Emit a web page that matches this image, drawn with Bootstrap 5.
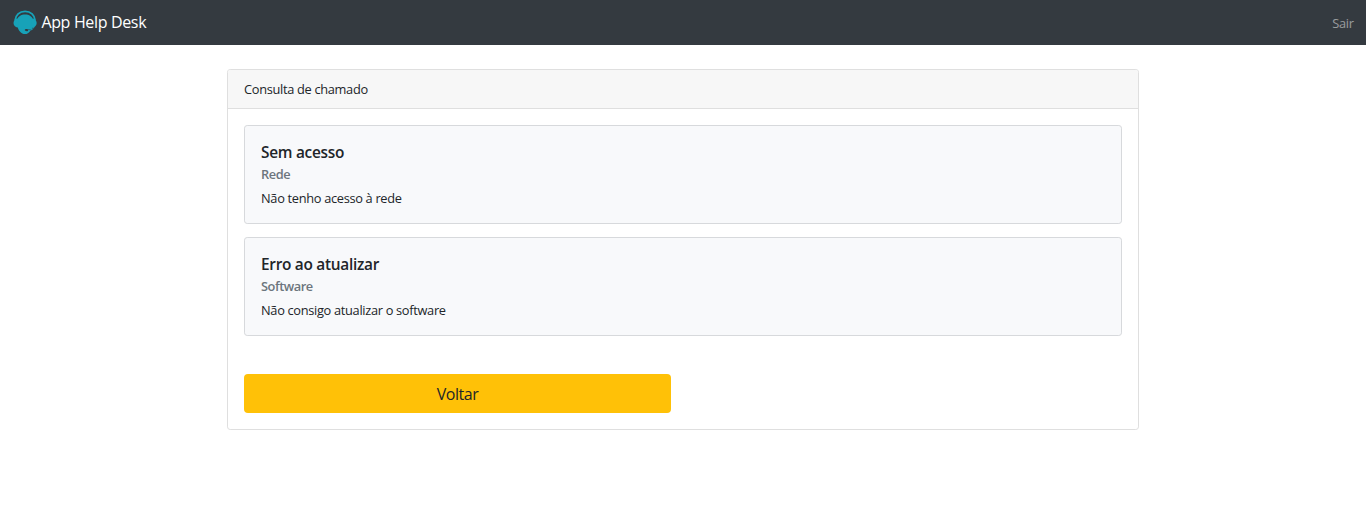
<!DOCTYPE html>
<html lang="pt-br">
<head>
<meta charset="utf-8">
<meta name="viewport" content="width=device-width, initial-scale=1">
<title>App Help Desk</title>
<link href="https://cdn.jsdelivr.net/npm/bootstrap@5.3.0/dist/css/bootstrap.min.css" rel="stylesheet">
<style>
  body { font-family: "Open Sans", "Noto Sans", sans-serif; font-size: 12.8px; line-height: 19.2px; color: #212529; letter-spacing: -.31px; }
  .topbar { height: 45px; background: #343a40; padding: 0 12.4px; }
  .topbar .navbar-brand { font-size: 16px; line-height: 24px; letter-spacing: -.34px; color: #fff; gap: 4px; }
  .topbar .brand-name { margin-top: -1px; }
  .topbar .nav-link { color: rgba(255,255,255,.5); padding: 2px 0 0; }
  .page { width: 912px; margin: 24px auto 0; }
  .card { --bs-card-border-color: #dfdfdf; --bs-card-border-radius: 3.2px; --bs-card-inner-border-radius: 2.2px; }
  .card-header { height: 39px; padding: 2px 16px 0; background: #f7f7f7; }
  .panel { padding: 16px 16px 16px; }
  .ticket { height: 99px; background: #f8f9fb; border-color: #d7d9dc; padding: 16px; margin-bottom: 13px; }
  .ticket h5 { font-size: 15.4px; line-height: 19px; font-weight: 600; letter-spacing: -.28px; margin: 1px 0 5px; }
  .ticket h6 { font-size: 12.8px; line-height: 15px; font-weight: 600; color: #6c757d; letter-spacing: -.45px; margin: 0 0 7px; }
  .btn-back { width: 427px; height: 39px; margin-top: 38px; padding: 2px 0 0; font-size: 16px; line-height: 37px; border: 0; border-radius: 4px; background: #ffc107; color: #212529; letter-spacing: -.5px; }
</style>
</head>
<body>
<nav class="navbar topbar flex-nowrap justify-content-between">
  <a class="navbar-brand d-flex align-items-center p-0 m-0" href="#">
    <svg width="25" height="25" viewBox="0 0 25 25" aria-hidden="true">
      <path fill="#17a2b8" d="M5 10C6 6.200 9 4.400 13.100 4.400S20.200 6.200 21.200 10v6.500c-.4 1.200-1.100 2.200-1.900 3h-3.500c-.5-.7-3-.6-3 .6s2.300 1.300 3.100.9h2.300c-1.300 2-3.100 3.100-5.100 3.100-3.900 0-6.700-3.400-7.600-7.600z"/>
      <path fill="none" stroke="#17a2b8" stroke-width="1.900" d="M3.100 10.600C3.400 5 7.600 1.400 13.100 1.400s9.700 3.600 10 9.200"/>
      <path fill="#17a2b8" d="M6.600 8.400v9.200C3.500 17.600 1.500 15.700 1.500 13s2-4.600 5.100-4.600zM19.600 8.400v9.200c3.100 0 5.100-1.900 5.100-4.600s-2-4.600-5.100-4.600z"/>
      <path fill="none" stroke="#17a2b8" stroke-width="1" d="M22.300 16.300c-.8 2.700-2.800 4-6.300 4.400"/>
    </svg>
    <span class="brand-name">App Help Desk</span>
  </a>
  <a class="nav-link" href="#">Sair</a>
</nav>
<main class="page">
  <div class="card">
    <div class="card-header d-flex align-items-center">Consulta de chamado</div>
    <div class="card-body panel">
      <div class="card ticket">
        <h5>Sem acesso</h5>
        <h6>Rede</h6>
        <p class="m-0">Não tenho acesso à rede</p>
      </div>
      <div class="card ticket">
        <h5>Erro ao atualizar</h5>
        <h6>Software</h6>
        <p class="m-0">Não consigo atualizar o software</p>
      </div>
      <button class="btn btn-warning btn-back d-block" type="button">Voltar</button>
    </div>
  </div>
</main>
<script src="https://cdn.jsdelivr.net/npm/bootstrap@5.3.0/dist/js/bootstrap.bundle.min.js"></script>
</body>
</html>
